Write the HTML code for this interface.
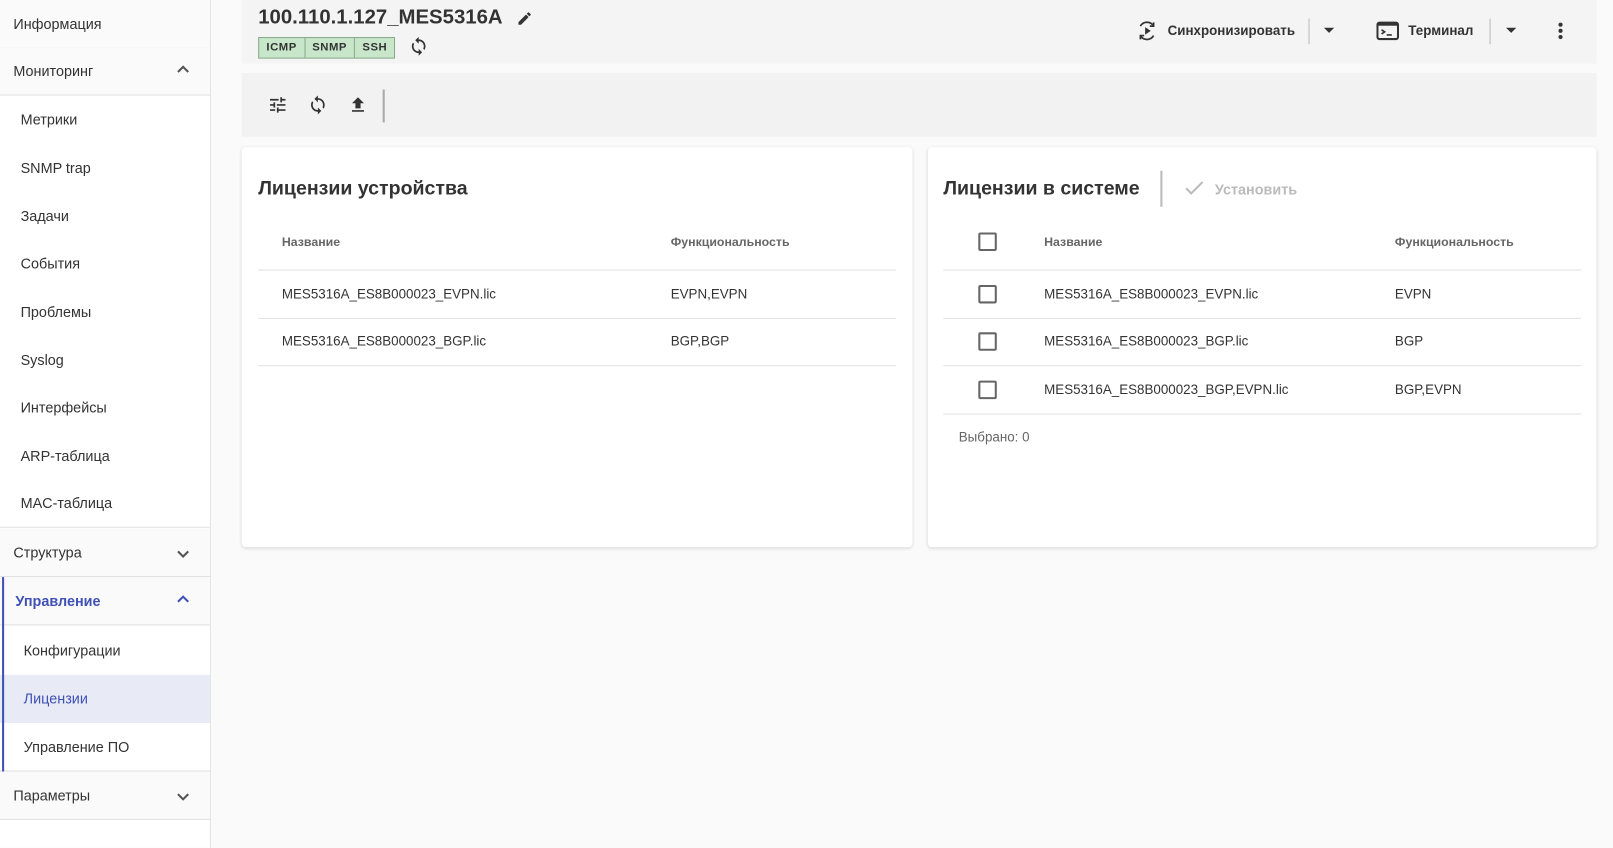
<!DOCTYPE html>
<html><head><meta charset="utf-8"><style>
*{box-sizing:border-box;margin:0;padding:0}
body{width:1613px;height:824px;background:#fafafa;font-family:"Liberation Sans",sans-serif;color:#333;position:relative;overflow:hidden;font-size:14px}
#w{position:absolute;left:0;top:0;width:1568px;height:801px;transform:scale(1.0287);transform-origin:0 0}
.a{position:absolute}
.sb{left:0;top:0;width:205px;height:824px;border-right:1px solid #e0e0e0;background:#fff}
.it{position:absolute;left:0;width:204px;height:47px;line-height:46px;border-bottom:1px solid #e0e0e0;font-size:14px;color:#333;padding-left:13px}
.it.g{background:#fafafa}
.it.s{padding-left:20px;background:#fff;border-bottom:none}
.chev{position:absolute;right:20px;top:17px}
.card{background:#fff;border-radius:4px;box-shadow:0 1px 3px rgba(0,0,0,.15)}
.th{font-size:12px;color:#666;font-weight:bold}
.row{position:absolute;border-bottom:1px solid #e0e0e0;height:47px;line-height:46px;font-size:13px;color:#333}
.cb{position:absolute;width:18px;height:18px;border:2px solid #666;border-radius:2px}
</style></head><body><div id="w">
<div class="a sb">
<div class="it g" style="top:0">Информация</div>
<div class="it g" style="top:46px">Мониторинг<svg class="chev" width="12" height="8" viewBox="0 0 12 8"><path d="M1 7L6 2l5 5" fill="none" stroke="#555" stroke-width="2"/></svg></div>
<div class="it s" style="top:93px">Метрики</div>
<div class="it s" style="top:140px">SNMP trap</div>
<div class="it s" style="top:187px">Задачи</div>
<div class="it s" style="top:233px">События</div>
<div class="it s" style="top:280px">Проблемы</div>
<div class="it s" style="top:327px">Syslog</div>
<div class="it s" style="top:373px">Интерфейсы</div>
<div class="it s" style="top:420px">ARP-таблица</div>
<div class="it s" style="top:466px;border-bottom:1px solid #e0e0e0">MAC-таблица</div>
<div class="it g" style="top:514px">Структура<svg class="chev" style="top:21px" width="12" height="8" viewBox="0 0 12 8"><path d="M1 1l5 5 5-5" fill="none" stroke="#555" stroke-width="2"/></svg></div>
<div class="it g" style="top:561px;color:#3f51b5;font-weight:bold;padding-left:15px">Управление<svg class="chev" width="12" height="8" viewBox="0 0 12 8"><path d="M1 7L6 2l5 5" fill="none" stroke="#3f51b5" stroke-width="2"/></svg></div>
<div class="it s" style="top:609px;padding-left:23px">Конфигурации</div>
<div class="it s" style="top:656px;padding-left:23px;background:#e8eaf6;color:#3f51b5">Лицензии</div>
<div class="it s" style="top:703px;padding-left:23px;border-bottom:1px solid #e0e0e0">Управление ПО</div>
<div class="it g" style="top:750px">Параметры<svg class="chev" style="top:21px" width="12" height="8" viewBox="0 0 12 8"><path d="M1 1l5 5 5-5" fill="none" stroke="#555" stroke-width="2"/></svg></div>
<div class="a" style="left:2px;top:561px;width:2px;height:189px;background:#3f51b5"></div>
</div>

<div class="a" style="left:235px;top:0;width:1317px;height:62px;background:#f4f4f4"></div>
<div class="a" style="left:251px;top:6px;font-size:19.8px;font-weight:bold;color:#333">100.110.1.127_MES5316A</div>
<svg class="a" style="left:502px;top:10px" width="16" height="16" viewBox="0 0 24 24"><path d="M3 17.25V21h3.75L17.8 9.94l-3.75-3.75zM20.7 7.04a1 1 0 000-1.41l-2.34-2.34a1 1 0 00-1.41 0l-1.83 1.83 3.75 3.75z" fill="#333"/></svg>
<div class="a" style="left:251px;top:36px;height:21px;border:1px solid #8a8;background:#c8e6c9;display:flex;font-size:11px;font-weight:bold;letter-spacing:.5px;color:#333;line-height:19px">
<span style="padding:0 7px;border-right:1px solid #8a8">ICMP</span><span style="padding:0 7px;border-right:1px solid #8a8">SNMP</span><span style="padding:0 7px">SSH</span></div>
<svg class="a" style="left:397px;top:35px" width="20" height="20" viewBox="0 0 24 24"><path d="M12 4V1L8 5l4 4V6c3.31 0 6 2.69 6 6 0 1.01-.25 1.97-.7 2.8l1.46 1.46A7.93 7.93 0 0020 12c0-4.42-3.58-8-8-8zm0 14c-3.31 0-6-2.69-6-6 0-1.01.25-1.97.7-2.8L5.24 7.74A7.93 7.930 0 004 12c0 4.42 3.58 8 8 8v3l4-4-4-4v3z" fill="#333"/></svg>

<svg class="a" style="left:1104px;top:19px" width="22" height="22" viewBox="0 0 24 24"><path d="M10 8v8l6-4z" fill="#333"/><path d="M5 7a8 8 0 0114 0M19 17a8 8 0 01-14 0" fill="none" stroke="#333" stroke-width="1.8"/><path d="M19 3v4h-4M5 21v-4h4" fill="none" stroke="#333" stroke-width="1.8"/></svg>
<div class="a" style="left:1135px;top:22px;font-size:13px;font-weight:bold;color:#333">Синхронизировать</div>
<div class="a" style="left:1272px;top:18px;width:1px;height:25px;background:#bbb"></div>
<svg class="a" style="left:1286px;top:26px" width="12" height="8"><path d="M1 1h10L6 6z" fill="#333"/></svg>
<svg class="a" style="left:1338px;top:20px" width="22" height="20" viewBox="0 0 22 20"><rect x="1" y="2" width="20" height="16" rx="2" fill="none" stroke="#333" stroke-width="2"/><rect x="1" y="2" width="20" height="3" fill="#333"/><path d="M5 9l3 2-3 2M10 14h5" fill="none" stroke="#333" stroke-width="1.6"/></svg>
<div class="a" style="left:1369px;top:22px;font-size:13px;font-weight:bold;color:#333">Терминал</div>
<div class="a" style="left:1448px;top:18px;width:1px;height:25px;background:#bbb"></div>
<svg class="a" style="left:1463px;top:26px" width="12" height="8"><path d="M1 1h10L6 6z" fill="#333"/></svg>
<svg class="a" style="left:1514px;top:21px" width="6" height="18"><circle cx="3" cy="3" r="2" fill="#333"/><circle cx="3" cy="9" r="2" fill="#333"/><circle cx="3" cy="15" r="2" fill="#333"/></svg>

<div class="a" style="left:235px;top:71px;width:1317px;height:62px;background:#f2f2f2"></div>
<svg class="a" style="left:260px;top:92px" width="20" height="20" viewBox="0 0 24 24"><path d="M3 17v2h6v-2H3zM3 5v2h10V5H3zm10 16v-2h8v-2h-8v-2h-2v6h2zM7 9v2H3v2h4v2h2V9H7zm14 4v-2H11v2h10zm-6-4h2V7h4V5h-4V3h-2v6z" fill="#333"/></svg>
<svg class="a" style="left:299px;top:92px" width="20" height="20" viewBox="0 0 24 24"><path d="M12 4V1L8 5l4 4V6c3.31 0 6 2.69 6 6 0 1.01-.25 1.97-.7 2.8l1.46 1.46A7.93 7.93 0 0020 12c0-4.42-3.58-8-8-8zm0 14c-3.31 0-6-2.69-6-6 0-1.01.25-1.97.7-2.8L5.24 7.74A7.93 7.93 0 004 12c0 4.42 3.58 8 8 8v3l4-4-4-4v3z" fill="#333"/></svg>
<svg class="a" style="left:338px;top:92px" width="20" height="20" viewBox="0 0 24 24"><path d="M9 16h6v-6h4l-7-7-7 7h4zm-4 2h14v2H5z" fill="#333"/></svg>
<div class="a" style="left:372px;top:87px;width:2px;height:32px;background:#aaa"></div>

<div class="a card" style="left:235px;top:143px;width:652px;height:389px"></div>
<div class="a" style="left:251px;top:173px;font-size:19px;font-weight:bold;color:#333">Лицензии устройства</div>
<div class="a th" style="left:274px;top:228px">Название</div>
<div class="a th" style="left:652px;top:228px">Функциональность</div>
<div class="a" style="left:251px;top:262px;width:620px;height:1px;background:#e0e0e0"></div>
<div class="row" style="left:251px;top:263px;width:620px"><span class="a" style="left:23px">MES5316A_ES8B000023_EVPN.lic</span><span class="a" style="left:401px">EVPN,EVPN</span></div>
<div class="row" style="left:251px;top:309px;width:620px"><span class="a" style="left:23px">MES5316A_ES8B000023_BGP.lic</span><span class="a" style="left:401px">BGP,BGP</span></div>

<div class="a card" style="left:902px;top:143px;width:650px;height:389px"></div>
<div class="a" style="left:917px;top:173px;font-size:19px;font-weight:bold;color:#333">Лицензии в системе</div>
<div class="a" style="left:1128px;top:166px;width:2px;height:35px;background:#bbb"></div>
<svg class="a" style="left:1152px;top:176px" width="18" height="14"><path d="M1 7l5 5L17 1" fill="none" stroke="#bbb" stroke-width="2"/></svg>
<div class="a" style="left:1181px;top:176px;font-size:14px;font-weight:bold;color:#bbb">Установить</div>
<div class="cb" style="left:951px;top:226px"></div>
<div class="a th" style="left:1015px;top:228px">Название</div>
<div class="a th" style="left:1356px;top:228px">Функциональность</div>
<div class="a" style="left:917px;top:262px;width:620px;height:1px;background:#e0e0e0"></div>
<div class="row" style="left:917px;top:263px;width:620px"><div class="cb" style="left:34px;top:14px"></div><span class="a" style="left:98px">MES5316A_ES8B000023_EVPN.lic</span><span class="a" style="left:439px">EVPN</span></div>
<div class="row" style="left:917px;top:309px;width:620px"><div class="cb" style="left:34px;top:14px"></div><span class="a" style="left:98px">MES5316A_ES8B000023_BGP.lic</span><span class="a" style="left:439px">BGP</span></div>
<div class="row" style="left:917px;top:356px;width:620px"><div class="cb" style="left:34px;top:14px"></div><span class="a" style="left:98px">MES5316A_ES8B000023_BGP,EVPN.lic</span><span class="a" style="left:439px">BGP,EVPN</span></div>
<div class="a" style="left:932px;top:417px;font-size:13px;color:#666">Выбрано: 0</div>
</div></body></html>
